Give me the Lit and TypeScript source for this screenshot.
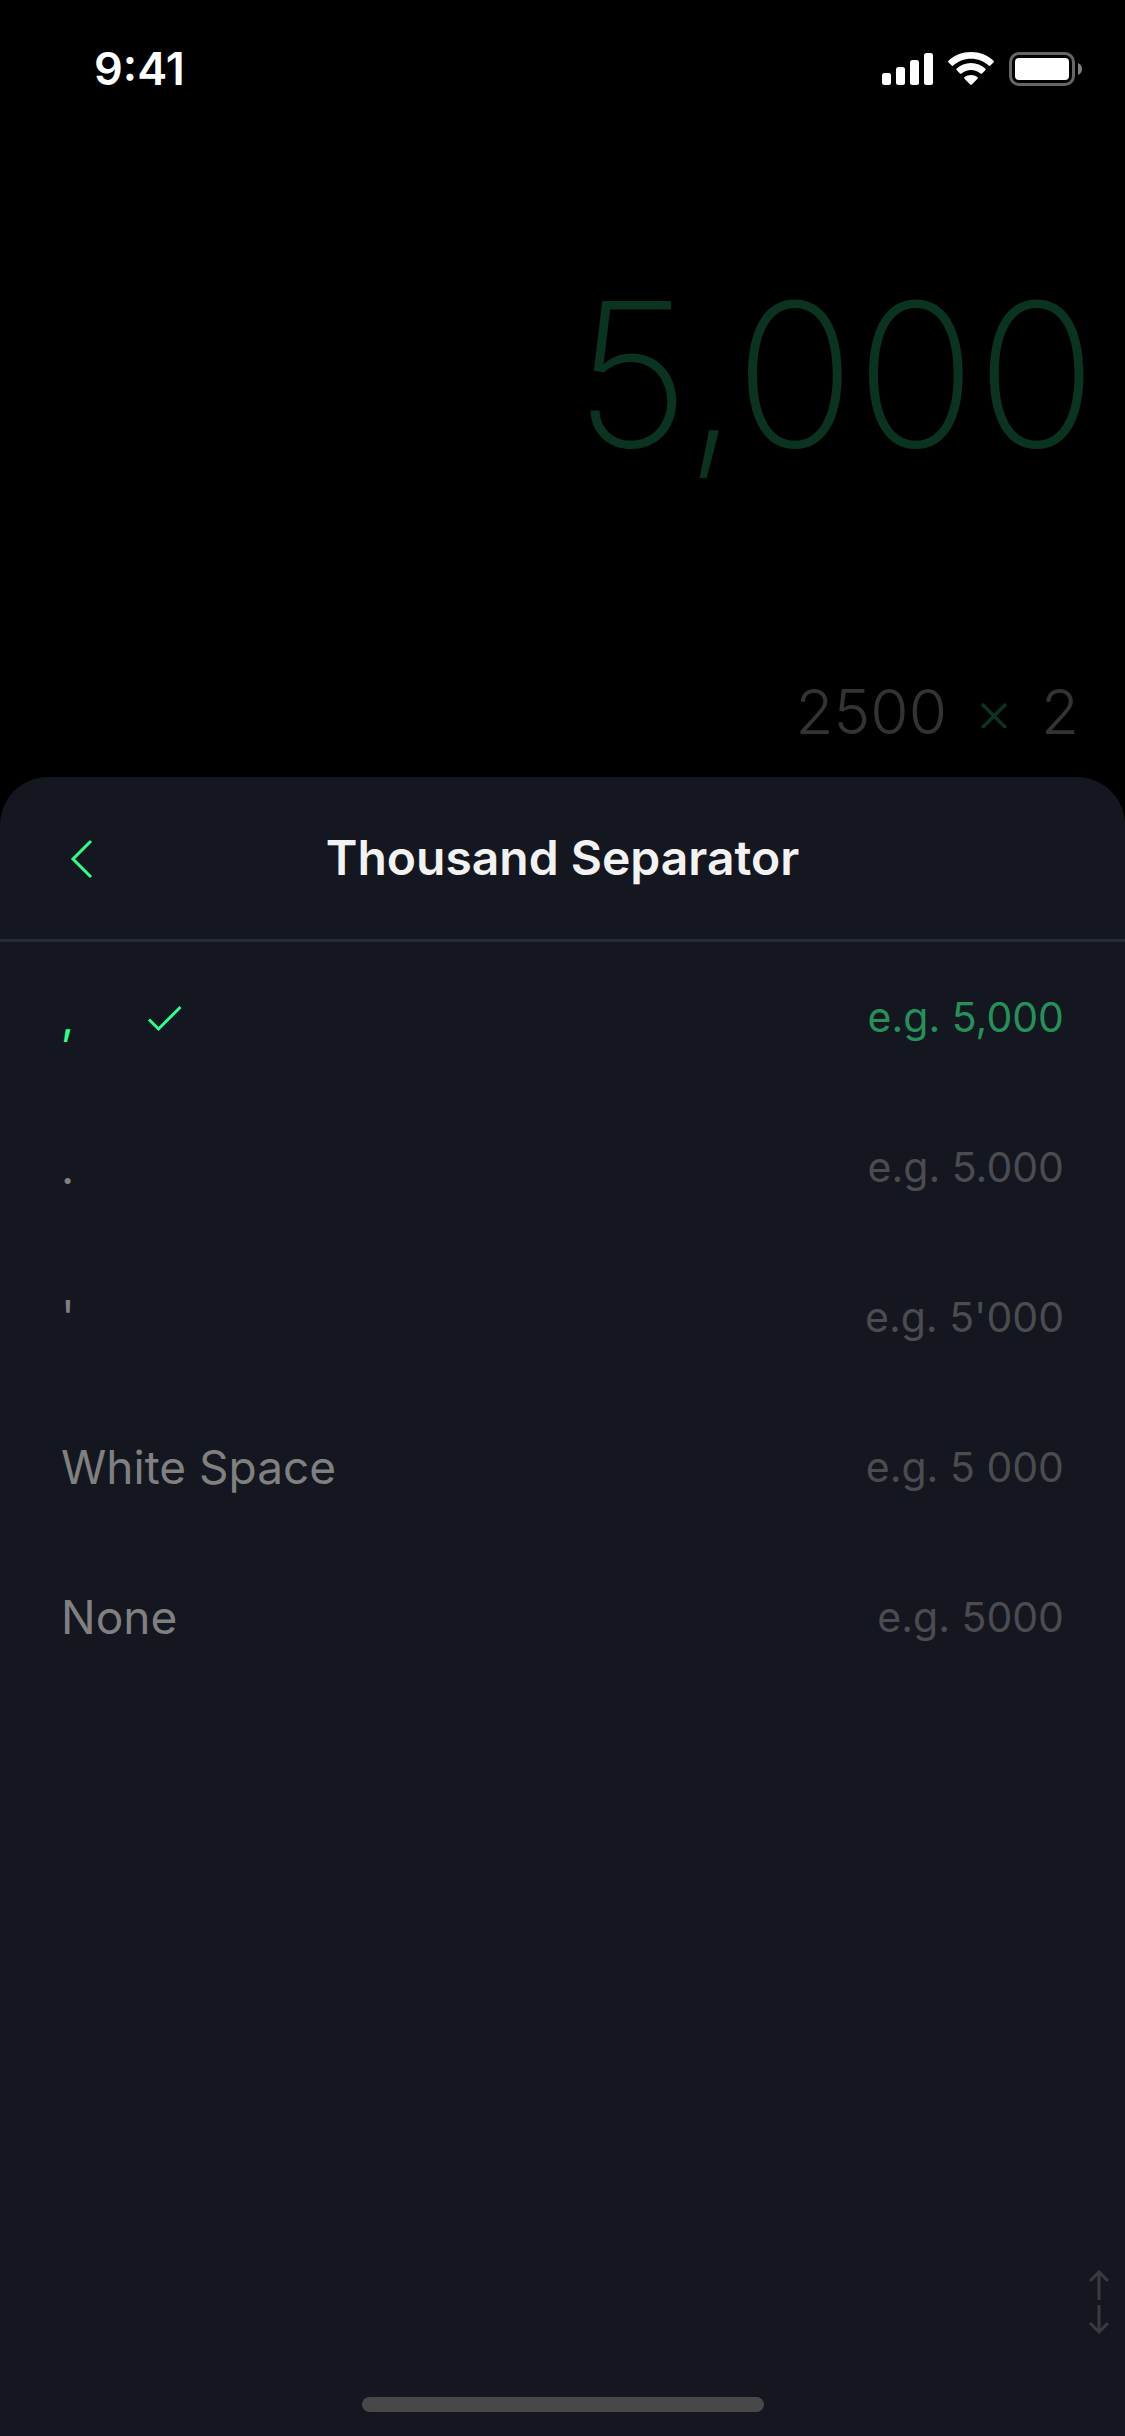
import { LitElement, html, css, svg, nothing } from "lit";
import { customElement, property, state } from "lit/decorators.js";
import { classMap } from "lit/directives/class-map.js";

interface SeparatorOption {
  id: string;
  label: string;
  example: string;
}

const OPTIONS: SeparatorOption[] = [
  { id: "comma", label: ",", example: "e.g. 5,000" },
  { id: "period", label: ".", example: "e.g. 5.000" },
  { id: "apostrophe", label: "'", example: "e.g. 5'000" },
  { id: "space", label: "White Space", example: "e.g. 5 000" },
  { id: "none", label: "None", example: "e.g. 5000" },
];

@customElement("status-bar")
export class StatusBar extends LitElement {
  static styles = css`
    :host {
      display: flex;
      align-items: center;
      justify-content: space-between;
      height: 138px;
      padding: 0 43px 0 94px;
      box-sizing: border-box;
      color: #fff;
    }
    .time {
      font-size: 45px;
      line-height: 54px;
      font-weight: 600;
    }
    .indicators {
      display: flex;
      align-items: center;
      gap: 15px;
    }
    .icon {
      display: block;
      fill: currentColor;
    }
  `;

  render() {
    return html`
      <span class="time">9:41</span>
      <span class="indicators">
        <svg class="icon" width="51" height="34" viewBox="0 0 51 34" aria-label="Signal">
          <rect x="0" y="21" width="9" height="12" rx="2.5" />
          <rect x="14" y="15" width="9" height="18" rx="2.5" />
          <rect x="28" y="8" width="9" height="25" rx="2.5" />
          <rect x="42" y="1" width="9" height="32" rx="2.5" />
        </svg>
        <svg class="icon" width="46" height="34" viewBox="0 0 46 34" aria-label="Wi-Fi">
          <path
            d="M23 0C14.300 0 6.400 3.300 0.500 8.800Q-0.300 9.600 0.500 10.400L3.700 13.600Q4.500 14.400 5.300 13.600C10 9.300 16.200 6.800 23 6.800S36 9.300 40.700 13.600Q41.500 14.400 42.300 13.600L45.500 10.400Q46.300 9.600 45.500 8.800C39.600 3.300 31.700 0 23 0Z"
          />
          <path
            d="M23 11C17.400 11 12.500 13.100 8.700 16.600Q7.900 17.400 8.700 18.200L12 21.500Q12.800 22.200 13.600 21.500C16.100 19.200 19.400 17.900 23 17.900S29.900 19.200 32.400 21.500Q33.200 22.200 34 21.500L37.300 18.200Q38.100 17.400 37.300 16.600C33.500 13.100 28.600 11 23 11Z"
          />
          <path
            d="M23 23C20.500 23 18.300 23.800 16.600 25.100Q15.700 25.900 16.500 26.700L22.200 32.400Q23 33.200 23.800 32.400L29.500 26.700Q30.300 25.900 29.400 25.100C27.700 23.800 25.500 23 23 23Z"
          />
        </svg>
        <svg class="icon" width="73" height="34" viewBox="0 0 73 34" aria-label="Battery">
          <rect x="1.500" y="1.500" width="63" height="31" rx="8.500" fill="none" stroke="#666" stroke-width="3" />
          <rect x="6" y="6" width="54" height="22" rx="4" />
          <path d="M69 11C71.500 12 73 14.300 73 17S71.500 22 69 23Z" fill="#808080" />
        </svg>
      </span>
    `;
  }
}

@customElement("separator-option")
export class SeparatorOptionRow extends LitElement {
  @property({ attribute: false }) option!: SeparatorOption;
  @property({ type: Boolean }) selected = false;

  static styles = css`
    :host {
      display: block;
    }
    .row {
      display: flex;
      align-items: center;
      height: 150px;
      padding: 0 61px;
      color: #808080;
      cursor: pointer;
    }
    .radio {
      appearance: none;
      width: 0;
      height: 0;
      margin: 0;
      outline: none;
    }
    .row:focus-within {
      background: #1b1f2a;
    }
    .label {
      min-width: 12px;
      font-size: 46px;
      line-height: 60px;
    }
    .check {
      margin-left: 72px;
      fill: none;
      stroke: currentColor;
      stroke-width: 3;
    }
    .example {
      margin-left: auto;
      font-size: 41px;
      line-height: 60px;
      color: #4b4c4f;
    }
    .selected {
      color: #2dff8c;
    }
    .selected .example {
      color: #25915a;
    }
  `;

  private pick() {
    this.dispatchEvent(
      new CustomEvent("pick", { detail: this.option.id, bubbles: true, composed: true }),
    );
  }

  render() {
    const { id, label, example } = this.option;
    return html`
      <label class=${classMap({ row: true, selected: this.selected })}>
        <input
          class="radio"
          type="radio"
          name="separator"
          .value=${id}
          .checked=${this.selected}
          @change=${this.pick}
        />
        <span class="label">${label}</span>
        ${this.selected
          ? svg`<svg class="check" width="38" height="30" viewBox="0 0 38 30" aria-hidden="true"><path d="M3 17.500L12.500 27L34.500 5"/></svg>`
          : nothing}
        <span class="example">${example}</span>
      </label>
    `;
  }
}

@customElement("app-root")
export class AppRoot extends LitElement {
  @state() private selected = "comma";

  static styles = css`
    :host {
      display: flex;
      flex-direction: column;
      min-height: 100vh;
      background: #000;
      font-family: Inter, "Liberation Sans", sans-serif;
    }
    .display {
      display: flex;
      flex-direction: column;
      align-items: flex-end;
      gap: 178px;
      padding: 116px 28px 25px;
    }
    .result {
      font-size: 200px;
      line-height: 240px;
      font-weight: 200;
      color: #0a3320;
    }
    .expression {
      display: flex;
      align-items: center;
      gap: 31px;
      padding-right: 18px;
      font-size: 62px;
      line-height: 80px;
      font-weight: 300;
      color: #333;
    }
    .times {
      fill: none;
      stroke: #0a3320;
      stroke-width: 3.5;
    }
    .sheet {
      flex: 1;
      display: flex;
      flex-direction: column;
      border-radius: 48px 48px 0 0;
      background: #14171f;
    }
    .header {
      display: grid;
      grid-template-columns: 1fr auto 1fr;
      align-items: center;
      height: 162px;
      border-bottom: 3px solid #252a37;
    }
    .back {
      justify-self: start;
      display: flex;
      margin-left: 44px;
      padding: 24px;
      border: 0;
      background: none;
      color: #2dff8c;
      cursor: pointer;
    }
    .glyph {
      fill: none;
      stroke: currentColor;
      stroke-width: 3;
    }
    .title {
      margin: 0;
      font-size: 48px;
      line-height: 60px;
      font-weight: 600;
      color: #f2f2f2;
    }
    .options {
      flex: 1;
      margin: 0;
      padding: 0;
      border: 0;
    }
    .resize {
      align-self: flex-end;
      display: flex;
      margin-right: 4px;
      padding: 12px;
      border: 0;
      background: none;
      color: #3a3b40;
      cursor: ns-resize;
    }
    .home {
      align-self: center;
      width: 402px;
      height: 15px;
      margin: 51px 0 24px;
      border-radius: 8px;
      background: #484848;
    }
  `;

  render() {
    return html`
      <status-bar></status-bar>
      <section class="display">
        <output class="result">5,000</output>
        <div class="expression">
          <span>2500</span>
          <svg class="times" width="32" height="32" viewBox="0 0 32 32" role="img" aria-label="times">
            <path d="M4 8L28 32M28 8L4 32" />
          </svg>
          <span>2</span>
        </div>
      </section>
      <main class="sheet">
        <header class="header">
          <button class="back" aria-label="Back">
            <svg class="glyph" width="28" height="40" viewBox="0 0 28 40">
              <path d="M23 3L5 21L23 39" />
            </svg>
          </button>
          <h1 class="title">Thousand Separator</h1>
        </header>
        <fieldset
          class="options"
          aria-label="Thousand Separator"
          @pick=${(e: CustomEvent<string>) => (this.selected = e.detail)}
        >
          ${OPTIONS.map(
            (option) => html`
              <separator-option .option=${option} ?selected=${option.id === this.selected}></separator-option>
            `,
          )}
        </fieldset>
        <button class="resize" aria-label="Resize panel">
          <svg class="glyph" width="20" height="64" viewBox="0 0 20 64">
            <path d="M10 30V3M1 11L10 2L19 11M10 35V62M1 53L10 62L19 53" />
          </svg>
        </button>
        <div class="home"></div>
      </main>
    `;
  }
}
